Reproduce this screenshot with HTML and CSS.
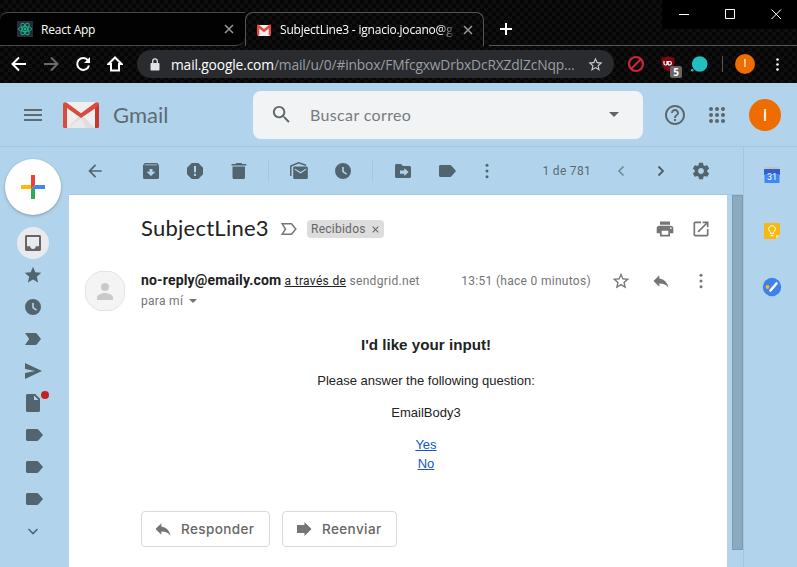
FILE: index.html
```html
<!DOCTYPE html>
<html lang="es">
<head>
<meta charset="utf-8">
<title>Gmail</title>
<link rel="stylesheet" href="styles.css">
</head>
<body>
<svg class="defs" width="0" height="0" aria-hidden="true">
  <symbol id="back" viewBox="0 0 24 24"><path d="M20 11H7.83l5.59-5.59L12 4l-8 8 8 8 1.41-1.41L7.83 13H20v-2z"/></symbol>
  <symbol id="star" viewBox="0 0 24 24"><path d="M12 17.27L18.18 21l-1.64-7.03L22 9.24l-7.19-.61L12 2 9.19 8.63 2 9.24l5.46 4.73L5.82 21z"/></symbol>
  <symbol id="star-o" viewBox="0 0 24 24"><path d="M22 9.24l-7.19-.62L12 2 9.19 8.63 2 9.24l5.46 4.73L5.82 21 12 17.27 18.18 21l-1.63-7.03L22 9.24zM12 15.4l-3.76 2.27 1-4.28-3.32-2.88 4.38-.38L12 6.1l1.71 4.04 4.38.38-3.32 2.88 1 4.28L12 15.4z"/></symbol>
  <symbol id="dots" viewBox="0 0 24 24"><circle cx="12" cy="5" r="1.800"/><circle cx="12" cy="12" r="1.800"/><circle cx="12" cy="19" r="1.800"/></symbol>
  <symbol id="label" viewBox="0 0 20 20"><path d="M3 4h9.500c.6 0 1.100.3 1.500.8L18.500 10 14 15.200c-.4.500-.9.8-1.500.8H3c-.8 0-1.500-.7-1.500-1.500v-9C1.500 4.700 2.200 4 3 4z"/></symbol>
  <symbol id="clock" viewBox="0 0 20 20"><path fill-rule="evenodd" d="M10 2a8 8 0 1 0 0 16 8 8 0 0 0 0-16zM9.200 6h1.600v4.200l3.200 2.300-.9 1.300-3.900-2.700z"/></symbol>
  <symbol id="reply" viewBox="0 0 24 24"><path d="M10 9V5l-7 7 7 7v-4.100c5 0 8.500 1.600 11 5.100-1-5-4-10-11-11z"/></symbol>
  <symbol id="close" viewBox="0 0 10 10"><path d="M1 1l8 8M9 1L1 9" fill="none" stroke="currentColor" stroke-width="1.500"/></symbol>
</svg>

<header class="browser">
  <div class="titlebar">
    <div class="tab tab-idle">
      <svg class="fav" viewBox="0 0 16 16"><path fill="#282c34" d="M0 0h16v16H0z"/><g fill="none" stroke="#11b38c"><ellipse cx="8" cy="8" rx="6.500" ry="2.500"/><ellipse cx="8" cy="8" rx="6.500" ry="2.500" transform="rotate(60 8 8)"/><ellipse cx="8" cy="8" rx="6.500" ry="2.500" transform="rotate(120 8 8)"/></g><circle cx="8" cy="8" r="1.400" fill="#11b38c"/></svg>
      <span class="tab-title">React App</span>
      <svg class="tab-close"><use href="#close"/></svg>
    </div>
    <div class="tab tab-active">
      <svg class="fav" viewBox="0 0 16 16"><path fill="#eee" d="M2 3h12v11H2z"/><path fill="#e04a3f" d="M1 3.500C1 2.600 2.400 2.300 3 3l5 4 5-4c.6-.7 2-.4 2 .500V13.500h-2.300V6.500L8 10.200 3.300 6.500v7H1z"/></svg>
      <span class="tab-title fade">SubjectLine3 - ignacio.jocano@g</span>
      <svg class="tab-close"><use href="#close"/></svg>
    </div>
    <div class="strip">
      <svg class="plus" viewBox="0 0 12 12"><path d="M6 0v12M0 6h12" stroke="#fff" stroke-width="2"/></svg>
    </div>
    <div class="window-buttons">
      <svg viewBox="0 0 46 29"><path d="M17 14.500h10"/></svg>
      <svg viewBox="0 0 46 29"><path d="M17.500 9.500h9v9h-9z"/></svg>
      <svg viewBox="0 0 46 29"><path d="M17.500 9.500l9.500 9.500M27 9.500l-9.500 9.500"/></svg>
    </div>
  </div>
  <div class="toolbar">
    <svg class="nav-ic" viewBox="0 0 16 16"><path d="M15 8H2M8 1.500L1.500 8 8 14.500"/></svg>
    <svg class="nav-ic dim" viewBox="0 0 16 16"><path d="M1 8h13M8 1.500L14.500 8 8 14.500"/></svg>
    <svg class="nav-ic" viewBox="0 0 16 16"><path d="M13 4.300A6 6 0 1 0 14 9.500"/><path class="solid" d="M15 1v6H9z"/></svg>
    <svg class="nav-ic" viewBox="0 0 16 16"><path d="M8 1.500L1.500 8H4v6.500h8V8h2.500z"/></svg>
    <div class="omnibox">
      <svg class="lock" viewBox="0 0 10 13"><path fill="#e0e2e5" d="M1.500 5h7c.6 0 1 .4 1 1v5.500c0 .6-.4 1-1 1h-7c-.6 0-1-.4-1-1V6c0-.6.4-1 1-1z"/><path d="M2.700 5V3.200a2.300 2.300 0 0 1 4.600 0V5" fill="none" stroke="#e0e2e5" stroke-width="1.300"/></svg>
      <span class="url"><b>mail.google.com</b>/mail/u/0/#inbox/FMfcgxwDrbxDcRXZdlZcNqp...</span>
      <svg class="bookmark"><use href="#star-o"/></svg>
    </div>
    <div class="extensions">
      <svg viewBox="0 0 18 18"><g fill="none" stroke="#c8283a" stroke-width="2.200"><circle cx="9" cy="9" r="7"/><path d="M14 4L4 14"/></g></svg>
      <div class="shield">
        <svg viewBox="0 0 16 18"><path fill="#800610" d="M8 1c2 1.200 4 1.500 6.500 1.500 0 7-.3 11-6.500 14C1.800 13.500 1.500 9.500 1.500 2.500 4 2.500 6 2.200 8 1z"/><path fill="none" stroke="#fff" stroke-width="1.200" d="M4 6v2.500a1.500 1.500 0 0 0 3 0V6M8.200 10V6.500h1.500a1.700 1.700 0 0 1 0 3.400H8"/></svg>
        <span>5</span>
      </div>
      <svg viewBox="0 0 18 18"><circle cx="9.700" cy="9" r="7.800" fill="#22bfc0"/><circle cx="2.200" cy="15.200" r="1.300" fill="#22bfc0"/></svg>
      <i></i>
      <span class="profile">I</span>
      <svg class="kebab"><use href="#dots"/></svg>
    </div>
  </div>
</header>

<div class="gmail">
  <div class="topbar">
    <svg class="menu" viewBox="0 0 18 12"><path d="M0 1h18M0 6h18M0 11h18" stroke="#5f6b73" stroke-width="2"/></svg>
    <svg class="logo" viewBox="0 0 36 26"><path fill="#efefef" d="M2 0h32v26H2z"/><path fill="#dedede" d="M4 26l12-12 2 1.500L20 14l12 12z"/><path fill="#e9e9e9" d="M4 26l13-9 2 0 4 9z"/><path fill="#d94b3f" d="M0 2.500C0 .4 2.200-.5 3.800.7L18 11.300 32.200.7C33.800-.5 36 .4 36 2.500L33.500 5.500 18 16 4 6v20H1.500C.6 26 0 25.400 0 24.500z"/><path fill="#c5392f" d="M32 6.200l4-3.700v22c0 .9-.6 1.500-1.500 1.500H32z"/></svg>
    <span class="brand">Gmail</span>
    <div class="search">
      <svg class="lens" viewBox="0 0 24 24"><path d="M15.500 14h-.79l-.28-.27C15.410 12.590 16 11.110 16 9.500 16 5.910 13.090 3 9.500 3S3 5.910 3 9.500 5.910 16 9.500 16c1.610 0 3.090-.59 4.230-1.570l.27.28v.79l5 4.990L20.490 19l-4.990-5zm-6 0C7.010 14 5 11.990 5 9.500S7.010 5 9.500 5 14 7.010 14 9.500 11.990 14 9.500 14z"/></svg>
      <span>Buscar correo</span>
      <svg class="caret" viewBox="0 0 10 5"><path d="M0 0h10L5 5z"/></svg>
    </div>
    <svg class="help" viewBox="0 0 24 24"><path d="M11 18h2v-2h-2v2zm1-16C6.480 2 2 6.480 2 12s4.480 10 10 10 10-4.480 10-10S17.520 2 12 2zm0 18c-4.410 0-8-3.590-8-8s3.590-8 8-8 8 3.590 8 8-3.590 8-8 8zm0-14c-2.210 0-4 1.790-4 4h2c0-1.100.9-2 2-2s2 .9 2 2c0 2-3 1.750-3 5h2c0-2.250 3-2.500 3-5 0-2.210-1.790-4-4-4z"/></svg>
    <svg class="apps" viewBox="0 0 16 16"><g><circle cx="2" cy="2" r="2"/><circle cx="8" cy="2" r="2"/><circle cx="14" cy="2" r="2"/><circle cx="2" cy="8" r="2"/><circle cx="8" cy="8" r="2"/><circle cx="14" cy="8" r="2"/><circle cx="2" cy="14" r="2"/><circle cx="8" cy="14" r="2"/><circle cx="14" cy="14" r="2"/></g></svg>
    <span class="account">I</span>
  </div>

  <div class="workspace">
    <nav class="side">
      <div class="compose"><svg viewBox="0 0 24 24"><path fill="#ea4335" d="M10 0h4v10l-4 4z"/><path fill="#fbbc04" d="M0 10h10v4H0z"/><path fill="#34a853" d="M10 14h4v10h-4z"/><path fill="#4285f4" d="M14 10h10v4H10z"/></svg></div>
      <div class="item current"><svg viewBox="0 0 20 20"><path fill-rule="evenodd" d="M3.500 2h13c.8 0 1.500.7 1.500 1.500v13c0 .8-.7 1.500-1.500 1.500h-13c-.8 0-1.500-.7-1.500-1.500v-13C2 2.700 2.700 2 3.500 2zM4 4v9.300h3.300a2.700 2.700 0 0 0 5.400 0H16V4z"/></svg></div>
      <div class="item"><svg><use href="#star"/></svg></div>
      <div class="item"><svg><use href="#clock"/></svg></div>
      <div class="item"><svg viewBox="0 0 20 20"><path d="M2 4h10.500c.6 0 1 .2 1.400.7L18 10l-4.100 5.300c-.4.500-.8.7-1.400.7H2l4.200-6z"/></svg></div>
      <div class="item"><svg viewBox="0 0 20 20"><path d="M2 2l17 8-17 8v-6l10-2-10-2z"/></svg></div>
      <div class="item"><svg viewBox="0 0 20 20"><path fill-rule="evenodd" d="M4.500 1h7.700L17 5.800v11.700c0 .8-.7 1.500-1.500 1.500h-11c-.8 0-1.500-.7-1.500-1.500v-15C3 1.700 3.700 1 4.500 1zM11 2.500V7h4.500z"/></svg><b class="dot"></b></div>
      <div class="item"><svg class="tag"><use href="#label"/></svg></div>
      <div class="item"><svg class="tag"><use href="#label"/></svg></div>
      <div class="item"><svg class="tag"><use href="#label"/></svg></div>
      <div class="item"><svg viewBox="0 0 20 20"><path d="M5.500 8l4.500 4.500L14.500 8" fill="none" stroke="#52656f" stroke-width="1.600"/></svg></div>
    </nav>

    <section class="center">
      <div class="actions">
        <svg class="first"><use href="#back"/></svg>
        <svg viewBox="0 0 20 20"><path fill-rule="evenodd" d="M3.800 2h12.400L18 4.200v12.300c0 .8-.7 1.500-1.500 1.500h-13c-.8 0-1.500-.7-1.500-1.500V4.200zM4.200 3.400l-.7.900h13l-.7-.9zM8.500 8v2.800H5.500L10 15l4.500-4.200h-3V8z"/></svg>
        <svg viewBox="0 0 20 20"><path fill-rule="evenodd" d="M6.700 2h6.600L18 6.700v6.600L13.300 18H6.700L2 13.300V6.700zM9 5v6.200h2V5zm0 7.800V15h2v-2.200z"/></svg>
        <svg viewBox="0 0 20 20"><path d="M3.500 5.500h12.500v11c0 .8-.7 1.500-1.500 1.500H5c-.8 0-1.500-.7-1.500-1.500v-11zM2.500 3h4l.9-1h5l.9 1h4v1.500H2.500z"/></svg>
        <i></i>
        <svg viewBox="0 0 20 20"><path fill-rule="evenodd" d="M5.500 5.500h12c.6 0 1.300.6 1.300 1.300v9.900c0 .7-.7 1.300-1.300 1.300h-12c-.7 0-1.300-.6-1.300-1.300V6.800c0-.7.6-1.300 1.300-1.300zM5.800 7.500v1.300l5.700 3.700 5.700-3.700V7.500L11.500 11z"/><path d="M1.800 15V5L9.500 1.900 17 4.300" fill="none" stroke="#52656f" stroke-width="1.500"/></svg>
        <svg><use href="#clock"/></svg>
        <i></i>
        <svg viewBox="0 0 20 20"><path fill-rule="evenodd" d="M3.500 3H8l2 2h6.500c.8 0 1.500.7 1.500 1.500v9c0 .8-.7 1.500-1.500 1.500h-13c-.8 0-1.500-.7-1.500-1.500v-11C2 3.700 2.700 3 3.500 3zM7 9.500v3.200h4.300V15l4.300-3.900-4.300-3.900v2.300z"/></svg>
        <svg class="label-action"><use href="#label"/></svg>
        <svg><use href="#dots"/></svg>
        <span>1 de 781</span>
        <svg class="faded" viewBox="0 0 20 20"><path d="M12.500 5.500L8 10l4.500 4.500" fill="none" stroke="#52656f" stroke-width="1.700"/></svg>
        <svg viewBox="0 0 20 20"><path d="M7.500 5.500L12 10l-4.500 4.500" fill="none" stroke="#4b5d67" stroke-width="1.800"/></svg>
        <svg viewBox="0 0 24 24"><path d="M19.430 12.980c.04-.32.07-.64.07-.98s-.03-.66-.07-.98l2.110-1.650c.19-.15.24-.42.12-.64l-2-3.460c-.12-.22-.39-.3-.61-.22l-2.490 1c-.52-.4-1.080-.73-1.690-.98l-.38-2.650C14.460 2.180 14.250 2 14 2h-4c-.25 0-.46.18-.49.42l-.38 2.650c-.61.25-1.170.59-1.690.98l-2.490-1c-.23-.09-.49 0-.61.22l-2 3.460c-.13.22-.07.49.12.64l2.110 1.650c-.04.32-.07.65-.07.98s.03.66.07.98l-2.110 1.650c-.19.15-.24.42-.12.64l2 3.460c.12.22.39.3.61.22l2.490-1c.52.4 1.080.73 1.690.98l.38 2.650c.03.24.24.42.49.42h4c.25 0 .46-.18.49-.42l.38-2.650c.61-.25 1.170-.59 1.690-.98l2.490 1c.23.09.49 0 .61-.22l2-3.460c.12-.22.07-.49-.12-.64l-2.110-1.650zM12 15.500c-1.930 0-3.500-1.570-3.500-3.500s1.570-3.500 3.500-3.500 3.500 1.570 3.500 3.500-1.570 3.500-3.500 3.500z"/></svg>
      </div>
      <div class="reading">
        <article class="mail">
          <div class="subject-row">
            <h2>SubjectLine3</h2>
            <svg class="important" viewBox="0 0 16 12"><path d="M1.200.8h9.300L14.800 6l-4.300 5.200H1.200L4.500 6z" fill="none" stroke="#777" stroke-width="1.500"/></svg>
            <span class="chip">Recibidos <svg><use href="#close"/></svg></span>
            <div class="subject-tools">
              <svg viewBox="0 0 24 24"><path d="M19 8H5c-1.660 0-3 1.340-3 3v6h4v4h12v-4h4v-6c0-1.660-1.340-3-3-3zm-3 11H8v-5h8v5zm3-7c-.55 0-1-.45-1-1s.45-1 1-1 1 .45 1 1-.45 1-1 1zm-1-9H6v4h12V3z"/></svg>
              <svg viewBox="0 0 24 24"><path d="M19 19H5V5h7V3H5c-1.110 0-2 .9-2 2v14c0 1.100.89 2 2 2h14c1.100 0 2-.9 2-2v-7h-2v7zM14 3v2h3.590l-9.830 9.830 1.410 1.410L19 6.410V10h2V3h-7z"/></svg>
            </div>
          </div>
          <div class="sender-row">
            <svg class="avatar" viewBox="0 0 40 40"><path d="M15 .5h10C31 1.500 38.500 8 39.500 15v10C38.500 32 31 38.500 25 39.500H15C9 38.500 1.500 32 .5 25V15C1.500 8 9 1.500 15 .5z" fill="#f4f4f4" stroke="#e3e3e3"/><circle cx="20" cy="16" r="4" fill="#c9c9c9"/><path d="M12 29v-2.500c0-3 5.300-4.500 8-4.500s8 1.500 8 4.500V29z" fill="#c9c9c9"/></svg>
            <div class="sender">
              <div class="from"><b>no-reply@emaily.com</b> <u>a través de</u> <span>sendgrid.net</span></div>
              <div class="to">para mí <svg viewBox="0 0 8 4"><path d="M0 0h8L4 4z"/></svg></div>
            </div>
            <span class="time">13:51 (hace 0 minutos)</span>
            <div class="sender-tools">
              <svg><use href="#star-o"/></svg>
              <svg><use href="#reply"/></svg>
              <svg class="more"><use href="#dots"/></svg>
            </div>
          </div>
          <div class="message">
            <h3>I'd like your input!</h3>
            <p class="ask">Please answer the following question:</p>
            <p>EmailBody3</p>
            <div><a>Yes</a></div>
            <div><a>No</a></div>
          </div>
          <div class="replies">
            <span class="button respond"><svg><use href="#reply"/></svg><span>Responder</span></span>
            <span class="button forward"><svg viewBox="0 0 20 20"><path d="M3 6h7.500V3l7 7-7 7v-3H3z"/></svg><span>Reenviar</span></span>
          </div>
        </article>
        <div class="scroll"></div>
      </div>
    </section>

    <aside class="apps-panel">
      <svg viewBox="0 0 20 20"><path fill="#c8bdb8" d="M3.500 2h13v3h-13z"/><path fill="#2f5fd0" d="M2 4h16v6H2z"/><path fill="#4285f4" d="M2.500 9h15v9h-15z"/><text x="10" y="15" text-anchor="middle">31</text></svg>
      <svg viewBox="0 0 20 20"><path fill="#f5b912" d="M3.300 2h13.400c.7 0 1.300.6 1.300 1.300V14l-4 4H3.300C2.600 18 2 17.400 2 16.700V3.300C2 2.600 2.600 2 3.300 2z"/><path fill="#fbe08c" d="M14 14h4l-4 4z"/><path fill="none" stroke="#fff" stroke-width="1" d="M8.600 12.500V11a3.300 3.300 0 1 1 2.800 0v1.500zM8.300 14.700h3.400"/></svg>
      <svg viewBox="0 0 20 20"><circle cx="10" cy="10" r="9.200" fill="#4080ed"/><path d="M8.500 13.500l6-7" stroke="#fff" stroke-width="2.600" stroke-linecap="round"/><circle cx="5.500" cy="10" r="1.900" fill="#fbbc04"/></svg>
    </aside>
  </div>
</div>
</body>
</html>
```

FILE: styles.css
```css
* { box-sizing: border-box; }
body { margin: 0; width: 797px; height: 567px; overflow: hidden; background: #b1d4ec; font-family: Roboto, "Liberation Sans", sans-serif; }
svg { display: block; fill: currentColor; flex: none; }
.defs { position: absolute; }
h2, h3, p { margin: 0; }

/* Browser chrome */
.browser { height: 83px; background-color: #060606; background-image: conic-gradient(#0f0f0f 25%, transparent 0 50%, #0f0f0f 0 75%, transparent 0); background-size: 8px 8px; color: #fff; font-family: "Open Sans", "Noto Sans", sans-serif; }
.titlebar { display: flex; height: 46px; padding-top: 12px; }
.tab { display: flex; align-items: center; height: 34px; font-size: 12px; }
.tab-idle { width: 245px; padding-left: 17px; border: solid #4a4a4a; border-width: 1px 0 1px 0; border-radius: 8px 0 9px 0; background: #020202; }
.tab-active { width: 239px; padding-left: 10px; border: solid #555; border-width: 1px 1px 0 1px; border-radius: 8px 8px 0 0; }
.fav { width: 16px; height: 16px; margin-right: 8px; }
.tab-title { overflow: hidden; white-space: nowrap; letter-spacing: -0.22px; }
.tab-idle .tab-title { width: 183px; }
.tab-active .tab-title { width: 174px; margin-right: 9px; letter-spacing: -0.2px; }
.fade { -webkit-mask-image: linear-gradient(90deg, #000 160px, transparent 176px); mask-image: linear-gradient(90deg, #000 160px, transparent 176px); }
.tab-close { width: 10px; height: 10px; color: #999; }
.strip { flex: 1; margin-left: 5px; padding: 11px 0 0 11px; border-bottom: 1px solid #555; }
.plus { width: 12px; height: 12px; }
.window-buttons { position: absolute; right: -3px; top: 0; display: flex; background: #000; }
.window-buttons svg { width: 46px; height: 29px; fill: none; stroke: #fff; }
.toolbar { display: flex; align-items: center; height: 37px; padding: 0 0 1px 11px; }
.nav-ic { width: 16px; height: 16px; margin-right: 16px; fill: none; stroke: #fff; stroke-width: 2; }
.nav-ic.dim { stroke: #6b6b6b; }
.nav-ic .solid { fill: #fff; stroke: none; }
.omnibox { display: flex; align-items: center; width: 477px; height: 28px; margin-left: -2px; padding: 0 10px 0 13px; border-radius: 14px; background: #292b2f; }
.lock { width: 10px; height: 13px; margin-right: 11px; }
.url { flex: 1; min-width: 0; white-space: nowrap; font-size: 13.800px; letter-spacing: -.15px; color: #9a9ea3; }
.url b { font-weight: 400; color: #fff; }
.bookmark { width: 17px; height: 17px; color: #c8cacd; }
.extensions { display: flex; align-items: center; margin-left: 13px; }
.extensions svg { width: 18px; height: 18px; }
.shield { position: relative; margin: 0 14px 0 15px; }
.shield svg { width: 16px; }
.shield span { position: absolute; left: 10px; top: 11px; width: 12px; height: 12px; border-radius: 2px; background: #666; font-size: 10px; font-weight: 700; line-height: 12px; text-align: center; }
.extensions i { width: 1px; height: 16px; margin: 0 12px 0 14px; background: #555; }
.profile { width: 20px; height: 20px; border-radius: 50%; background: #ef6c00; font: 11px/20px Roboto, sans-serif; text-align: center; }
.extensions .kebab { width: 17px; height: 17px; margin-left: 14px; }

/* Gmail top bar */
.topbar { display: flex; align-items: center; height: 64px; padding-left: 24px; border-bottom: 1px solid #a3c7df; color: #5f666b; }
.menu { width: 18px; height: 12px; margin-right: 21px; }
.logo { width: 36px; height: 26px; margin-right: 14px; }
.brand { width: 140px; font-family: Lato, sans-serif; font-size: 22px; color: #5f6b73; }
.search { display: flex; align-items: center; width: 390px; height: 48px; padding: 0 24px 0 17px; border-radius: 8px; background: #f1f3f4; }
.search span { flex: 1; margin-left: 17px; font-family: Lato, sans-serif; font-size: 16px; letter-spacing: .36px; color: #777b7f; }
.lens { width: 23px; height: 23px; }
.caret { width: 10px; height: 5px; }
.help { width: 24px; height: 24px; margin: 0 22px 0 20px; }
.apps { width: 16px; height: 16px; }
.account { width: 32px; height: 32px; margin-left: 24px; border-radius: 50%; background: #ef6c00; color: #fff; font-size: 17px; line-height: 33px; text-align: center; }

/* Work area */
.workspace { display: flex; height: 420px; color: #52656f; }
.side { display: flex; flex-direction: column; align-items: center; width: 69px; padding: 12px 3px 0 0; }
.compose { display: grid; place-items: center; width: 56px; height: 56px; margin-bottom: 12px; border-radius: 50%; background: #fff; box-shadow: 0 1px 3px rgba(60, 64, 67, .4); }
.compose svg { width: 24px; height: 24px; }
.item { position: relative; display: grid; place-items: center; width: 32px; height: 32px; }
.item svg { width: 20px; height: 20px; }
.tag { transform: translateX(1.500px); }
.current { border-radius: 50%; background: #e8eaed; color: #666; }
.dot { position: absolute; right: 0; top: 4px; width: 8px; height: 8px; border-radius: 50%; background: #c5221f; }
.center { width: 674px; }
.actions { display: grid; grid-template-columns: 60px 44px 44px 44px 16px 44px 44px 16px 44px 44px 36px 96px 40px 40px 40px; place-items: center; height: 48px; border-bottom: 1px solid #a3c7df; }
.actions svg { width: 20px; height: 20px; }
.actions .first { margin-right: 8px; }
.actions i { width: 1px; height: 20px; margin-right: 1px; background: #a3c7df; }
.actions span { justify-self: end; margin-right: 10px; font-size: 12px; letter-spacing: .3px; color: #5b6a74; white-space: nowrap; }
.label-action { transform: translateX(.500px); }
.faded { opacity: .65; }
.reading { display: flex; height: 372px; }
.mail { width: 658px; background: #fff; color: #757575; }
.scroll { width: 11px; height: 355px; margin-left: 5px; border: 1px solid #7d9bb0; background: #8da9bd; }

/* Message */
.subject-row { display: flex; align-items: center; height: 68px; padding: 0 8px 0 72px; }
h2 { width: 140px; padding-bottom: 3px; font: 400 22px Lato, sans-serif; letter-spacing: .25px; color: #202124; }
.important { width: 16px; height: 12px; }
.chip { display: flex; align-items: center; width: 77px; height: 18px; margin-left: 10px; padding-left: 4px; border-radius: 4px; background: #ddd; font-size: 12px; letter-spacing: .25px; color: #666; }
.chip svg { width: 7px; height: 7px; margin-left: 6px; }
.subject-tools { display: flex; gap: 16px; margin-left: auto; padding-right: 8px; }
.subject-tools svg { width: 20px; height: 20px; }
.sender-row { display: flex; height: 60px; padding: 8px 6px 0 16px; }
.avatar { width: 40px; height: 40px; }
.sender { margin-left: 16px; font-size: 12px; white-space: nowrap; }
.from { height: 20px; line-height: 19px; letter-spacing: .32px; }
.from b { font-size: 14px; letter-spacing: .17px; color: #202124; }
.from u { color: #202124; }
.to { display: flex; align-items: center; height: 20px; letter-spacing: .3px; }
.to svg { width: 8px; height: 4px; margin-left: 6px; }
.time { margin-left: auto; font-size: 12px; line-height: 20px; letter-spacing: .3px; }
.sender-tools { display: flex; gap: 20px; padding: 0 10px; margin-left: 10px; }
.sender-tools svg { width: 20px; height: 20px; }
.message { height: 171px; padding: 12px 16px 0 72px; font: 13px/19px "Liberation Sans", Arial, sans-serif; color: #222; text-align: center; }
h3 { margin-bottom: 16px; font-size: 15.200px; line-height: 20px; }
p { margin-bottom: 13px; }
a { color: #15c; text-decoration: underline; }
.replies { display: flex; gap: 12px; margin: 17px 0 0 72px; }
.button { display: flex; align-items: center; height: 36px; padding-left: 11px; border: 1px solid #dadada; border-radius: 4px; font: 500 13.500px Inter, sans-serif; letter-spacing: .4px; color: #666; }
.button span { padding-bottom: 1px; }
.button svg { width: 20px; height: 20px; margin-right: 8px; color: #757575; }
.respond { width: 129px; }
.forward { width: 115px; }

/* Add-ons */
.apps-panel { display: flex; flex-direction: column; align-items: center; gap: 36px; width: 54px; padding: 18px 0 0 3px; border-left: 1px solid #a3c7df; }
.apps-panel svg { width: 20px; height: 20px; }
.apps-panel text { font: 9px Roboto, sans-serif; fill: #fff; }
```
